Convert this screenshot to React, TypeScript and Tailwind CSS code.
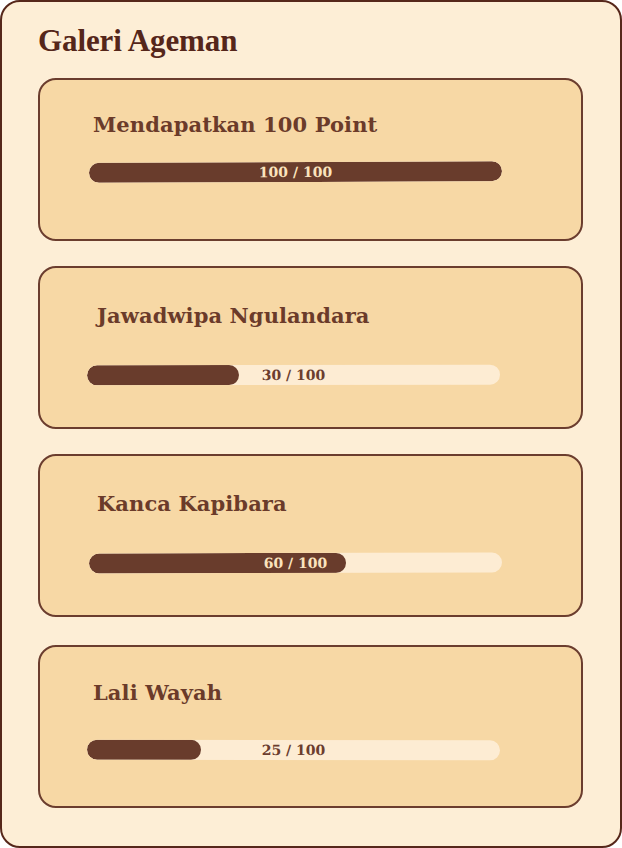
const items = [
  { title: "Mendapatkan 100 Point", value: 100, fill: "w-full", cardCls: "mt-0", titleCls: "pl-[53px] pt-[30px]", barCls: "ml-[49px] mt-[22px] -rotate-[0.25deg]", light: true },
  { title: "Jawadwipa Ngulandara", value: 30, fill: "w-[152px]", cardCls: "mt-0", titleCls: "pl-[57px] pt-[33px]", barCls: "ml-[47px] mt-[34px] -rotate-[0.1deg]", light: false },
  { title: "Kanca Kapibara", value: 60, fill: "w-[257px]", cardCls: "mt-0", titleCls: "pl-[57px] pt-[33px]", barCls: "ml-[49px] mt-[34px] -rotate-[0.15deg]", light: true },
  { title: "Lali Wayah", value: 25, fill: "w-[114px]", cardCls: "mt-[3px]", titleCls: "pl-[53px] pt-[31px]", barCls: "ml-[47px] mt-[32px] rotate-[0.1deg]", light: false },
];

function ProgressCard({ item }: { item: (typeof items)[number] }) {
  return (
    <div className={`${item.cardCls} h-[163px] rounded-[18px] border-2 border-[#6b3d2e] bg-[#f7d8a5]`}>
      <h2 className={`${item.titleCls} font-['DejaVu_Serif',serif] text-[21px] font-bold leading-[30px] tracking-[0.1px] text-[#6b3b2a]`}>
        {item.title}
      </h2>
      <div className={`${item.barCls} relative h-[20px] w-[413px] overflow-hidden rounded-full bg-[#fdecd3]`}>
        <div className={`${item.fill} h-full rounded-full bg-[#693c2c]`} />
        <span
          className={`absolute inset-0 flex items-center justify-center font-['DejaVu_Serif',serif] text-[14px] font-bold ${
            item.light ? "text-[#fbe3bd]" : "text-[#6b3d2e]"
          }`}
        >
          {item.value} / 100
        </span>
      </div>
    </div>
  );
}

export default function App() {
  return (
    <div className="h-[848px] w-[622px] font-['Liberation_Serif','DejaVu_Serif',serif]">
      <div className="h-full rounded-[20px] border-2 border-[#56271a] bg-[#fdeed6] px-[36px]">
        <h1 className="pt-[20px] text-[31px] font-bold leading-[38px] tracking-[-0.1px] text-[#55261a]">
          Galeri Ageman
        </h1>
        <div className="mt-[18px] flex flex-col gap-[25px] pr-[1px]">
          {items.map((item) => (
            <ProgressCard key={item.title} item={item} />
          ))}
        </div>
      </div>
    </div>
  );
}
